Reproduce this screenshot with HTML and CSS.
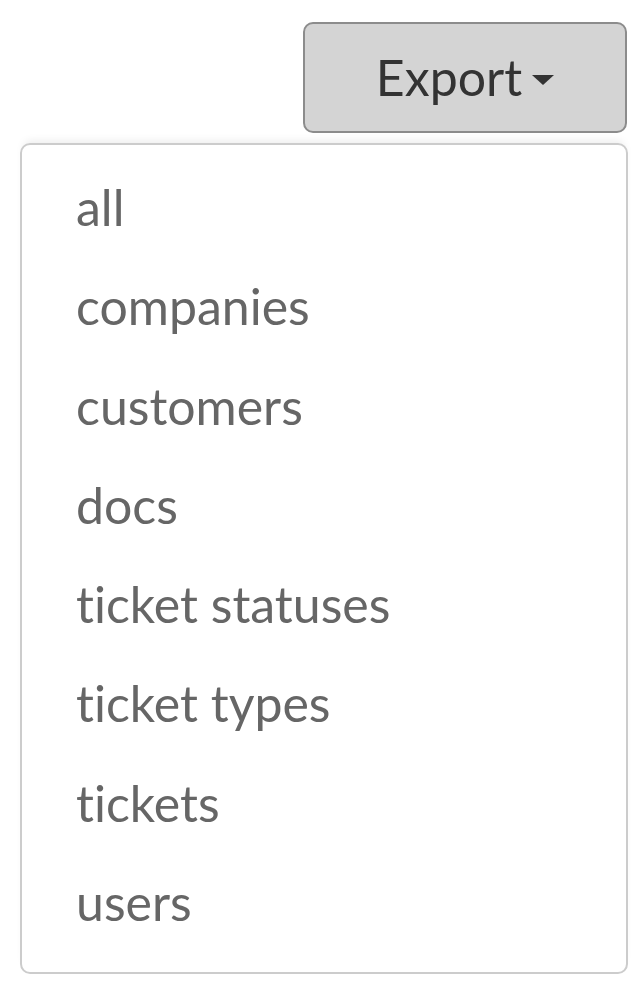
FILE: index.html
```html
<!DOCTYPE html>
<html lang="en">
<head>
    <meta charset="UTF-8">
    <title>Export</title>
    <link rel="stylesheet" href="styles.css">
</head>
<body>

<div class="export">
    <button type="button" class="export-btn">Export <span class="caret"></span></button>

    <!-- Export menu -->
    <ul class="export-menu">
        <li><a href="#">all</a></li>
        <li><a href="#">companies</a></li>
        <li><a href="#">customers</a></li>
        <li><a href="#">docs</a></li>
        <li><a href="#">ticket statuses</a></li>
        <li><a href="#">ticket types</a></li>
        <li><a href="#">tickets</a></li>
        <li><a href="#">users</a></li>
    </ul>
</div>

</body>
</html>
```

FILE: styles.css
```css
body {
    margin: 0;
    font-family: Lato, "Liberation Sans", sans-serif;
    font-variant-ligatures: none;
    background-color: #ffffff;
}
.export {
    width: 608px;
    margin: 22px 0 0 20px;
    display: flex;
    flex-direction: column;
}
.export-btn {
    align-self: flex-end;
    margin-right: 1px;
    width: 324px;
    height: 111px;
    background-color: #d4d4d4;
    border: 2px solid #8c8c8c;
    border-radius: 10px;
    color: #333333;
    font-family: inherit;
    font-variant-ligatures: none;
    font-size: 50px;
    display: flex;
    align-items: center;
    justify-content: center;
    gap: 10px;
    padding: 0 0 2px 0;
}
.caret {
    width: 0;
    height: 0;
    border-left: 11px solid transparent;
    border-right: 11px solid transparent;
    border-top: 10px solid #333333;
    margin-top: 6px;
}
.export-menu {
    list-style: none;
    margin: 10px 0 0 0;
    padding: 13px 0 20px 0;
    border: 2px solid #cccccc;
    border-radius: 10px;
    box-shadow: 0 -6px 8px -4px rgba(0, 0, 0, 0.08);
}
.export-menu li a {
    display: block;
    padding-left: 54px;
    line-height: 99.3px;
    font-size: 50px;
    color: #666666;
    text-decoration: none;
}
```
